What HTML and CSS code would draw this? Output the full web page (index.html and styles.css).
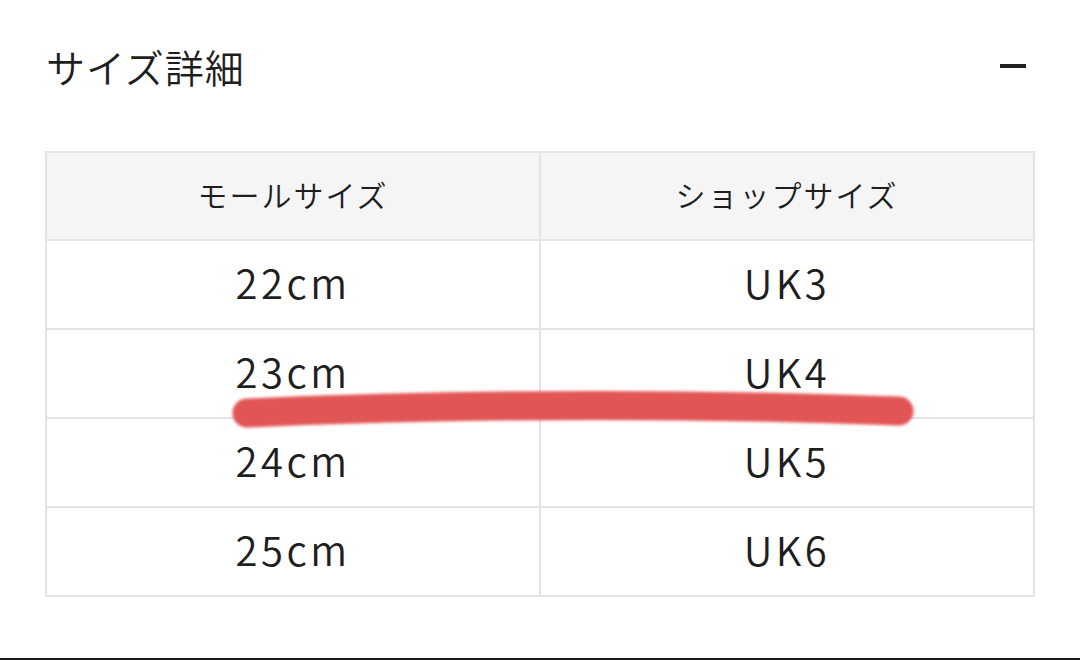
FILE: index.html
```html
<!DOCTYPE html>
<html lang="ja">
<head>
<meta charset="utf-8">
<link rel="stylesheet" href="styles.css">
</head>
<body>
<div class="page">
  <div class="section-head">
    <h2 class="title">サイズ詳細</h2>
    <span class="toggle" aria-label="閉じる"></span>
  </div>
  <table class="size-table">
    <thead>
      <tr><th>モールサイズ</th><th>ショップサイズ</th></tr>
    </thead>
    <tbody>
      <tr><td>22cm</td><td>UK3</td></tr>
      <tr><td>23cm</td><td>UK4</td></tr>
      <tr><td>24cm</td><td>UK5</td></tr>
      <tr><td>25cm</td><td>UK6</td></tr>
    </tbody>
  </table>
  <svg class="marker" width="1080" height="660" viewBox="0 0 1080 660">
    <defs>
      <filter id="soft" filterUnits="userSpaceOnUse" x="200" y="370" width="740" height="80">
        <feGaussianBlur stdDeviation="1.4"/>
      </filter>
    </defs>
    <path d="M247 413 Q 570 399 899 411" fill="none" stroke="#e25454" stroke-width="29" stroke-linecap="round" filter="url(#soft)"/>
  </svg>
</div>
</body>
</html>
```

FILE: styles.css
```css
html, body {
  margin: 0;
  padding: 0;
  background: #ffffff;
}

.page {
  position: relative;
  width: 1080px;
  height: 660px;
  box-sizing: border-box;
  border-bottom: 2px solid #1c1c1c;
  font-family: "Noto Sans CJK JP", "Noto Sans", sans-serif;
  color: #1e1e1e;
}

.section-head {
  display: flex;
  align-items: center;
  justify-content: space-between;
  height: 134px;
  padding: 0 54px 0 46px;
  box-sizing: border-box;
}

.title {
  margin: 0;
  font-size: 39px;
  font-weight: 350;
  letter-spacing: 1px;
  line-height: 1;
  transform: translateY(-1px);
}

.toggle {
  display: block;
  width: 26px;
  height: 4px;
  background: #222222;
  transform: translateY(-1px);
}

.size-table {
  margin: 17px 0 0 45px;
  width: 990px;
  border-collapse: collapse;
  table-layout: fixed;
}

.size-table th,
.size-table td {
  border: 2px solid #e4e4e4;
  text-align: center;
  vertical-align: middle;
  padding: 0 0 5px;
  font-weight: 350;
}

.size-table th {
  height: 81px;
  background: #f5f5f5;
  font-size: 30px;
  letter-spacing: 2px;
}

.size-table td {
  height: 82px;
  font-size: 40px;
  letter-spacing: 3.5px;
}

.marker {
  position: absolute;
  left: 0;
  top: 0;
  pointer-events: none;
}
```
